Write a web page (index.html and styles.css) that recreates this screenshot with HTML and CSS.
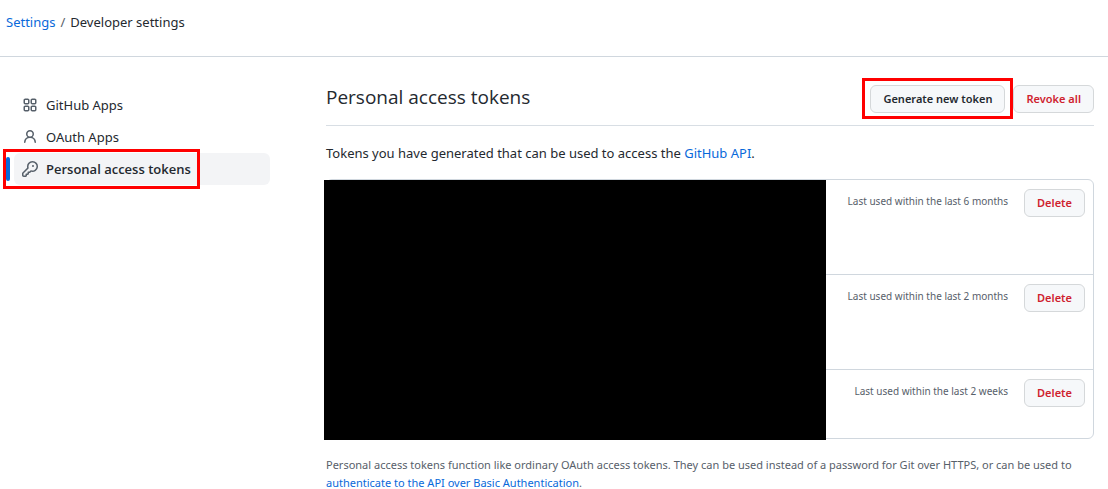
FILE: index.html
```html
<!DOCTYPE html>
<html lang="en">
<head>
    <meta charset="UTF-8">
    <meta name="viewport" content="width=device-width, initial-scale=1.0">
    <title>Personal access tokens</title>
    <link rel="stylesheet" href="styles.css">
</head>
<body>

    <header class="page-header">
        <nav class="breadcrumb" aria-label="Breadcrumb">
            <a href="#">Settings</a>
            <span class="separator">/</span>
            <span>Developer settings</span>
        </nav>
    </header>

    <div class="layout">
        <nav class="sidebar" aria-label="Developer settings">
            <a class="nav-item" href="#">
                <svg width="16" height="16" viewBox="0 0 16 16"><path fill-rule="evenodd" d="M1.5 3.25c0-.966.784-1.75 1.75-1.75h2.5c.966 0 1.75.784 1.75 1.75v2.5A1.75 1.75 0 015.75 7.5h-2.5A1.75 1.75 0 011.5 5.75v-2.5zM3.25 3a.25.25 0 00-.25.25v2.5c0 .138.112.25.25.25h2.5A.25.25 0 006 5.75v-2.5A.25.25 0 005.75 3h-2.5zM1.5 10.25c0-.966.784-1.75 1.75-1.75h2.5c.966 0 1.75.784 1.75 1.75v2.5a1.75 1.75 0 01-1.75 1.75h-2.5a1.75 1.75 0 01-1.75-1.75v-2.5zM3.25 10a.25.25 0 00-.25.25v2.5c0 .138.112.25.25.25h2.5a.25.25 0 00.25-.25v-2.5a.25.25 0 00-.25-.25h-2.5zM8.5 3.25c0-.966.784-1.75 1.75-1.75h2.5c.966 0 1.75.784 1.75 1.75v2.5a1.75 1.75 0 01-1.75 1.75h-2.5A1.75 1.75 0 018.5 5.75v-2.5zM10.25 3a.25.25 0 00-.25.25v2.5c0 .138.112.25.25.25h2.5a.25.25 0 00.25-.25v-2.5a.25.25 0 00-.25-.25h-2.5zM8.5 10.25c0-.966.784-1.75 1.75-1.75h2.5c.966 0 1.75.784 1.75 1.75v2.5a1.75 1.75 0 01-1.75 1.75h-2.5a1.75 1.75 0 01-1.75-1.75v-2.5zM10.25 10a.25.25 0 00-.25.25v2.5c0 .138.112.25.25.25h2.5a.25.25 0 00.25-.25v-2.5a.25.25 0 00-.25-.25h-2.5z"/></svg>
                <span>GitHub Apps</span>
            </a>
            <a class="nav-item" href="#">
                <svg width="16" height="16" viewBox="0 0 16 16"><path fill-rule="evenodd" d="M10.5 5a2.5 2.5 0 11-5 0 2.5 2.5 0 015 0zm.061 3.073a4 4 0 10-5.123 0 6.004 6.004 0 00-3.431 5.142.75.75 0 001.498.07 4.5 4.5 0 018.99 0 .75.75 0 101.498-.07 6.005 6.005 0 00-3.432-5.142z"/></svg>
                <span>OAuth Apps</span>
            </a>
            <a class="nav-item active" href="#" aria-current="page">
                <svg width="16" height="16" viewBox="0 0 16 16"><path fill-rule="evenodd" d="M6.5 5.5a4 4 0 112.731 3.795.75.75 0 00-.768.18L7.44 10.5H6.25a.75.75 0 00-.75.75v1.19l-.06.06H4.25a.75.75 0 00-.75.75v1.19l-.06.06H1.75a.25.25 0 01-.25-.25v-1.69l5.024-5.023a.75.75 0 00.181-.768A3.995 3.995 0 016.5 5.5zm4-5.5a5.5 5.5 0 00-5.348 6.788L.22 11.72a.75.75 0 00-.22.53v2C0 15.216.784 16 1.75 16h2a.75.75 0 00.53-.22l.5-.5a.75.75 0 00.22-.53V14h.75a.75.75 0 00.53-.22l.5-.5a.75.75 0 00.22-.53V12h.75a.75.75 0 00.53-.22l.932-.932A5.5 5.5 0 1010.5 0zm.5 6a1 1 0 100-2 1 1 0 000 2z"/></svg>
                <span>Personal access tokens</span>
            </a>
        </nav>

        <main class="content">
            <div class="subhead">
                <h1>Personal access tokens</h1>
                <div class="subhead-actions">
                    <div class="highlight">
                        <button class="btn" type="button">Generate new token</button>
                    </div>
                    <button class="btn btn-danger" type="button">Revoke all</button>
                </div>
            </div>

            <p class="intro">Tokens you have generated that can be used to access the <a href="#">GitHub API</a>.</p>

            <div class="token-list">
                <div class="token-row">
                    <span class="last-used">Last used within the last 6 months</span>
                    <button class="btn btn-danger" type="button">Delete</button>
                </div>
                <div class="token-row">
                    <span class="last-used">Last used within the last 2 months</span>
                    <button class="btn btn-danger" type="button">Delete</button>
                </div>
                <div class="token-row">
                    <span class="last-used">Last used within the last 2 weeks</span>
                    <button class="btn btn-danger" type="button">Delete</button>
                </div>
                <div class="redacted"></div>
            </div>

            <p class="note">Personal access tokens function like ordinary OAuth access tokens. They can be used instead of a password for Git over HTTPS, or can be used to <a href="#">authenticate to the API over Basic Authentication</a>.</p>
        </main>
    </div>

</body>
</html>
```
FILE: styles.css
```css
*,
*::before,
*::after {
    margin: 0;
    padding: 0;
    box-sizing: border-box;
}

body {
    background: #fff;
    color: #24292f;
    font-family: "Segoe UI", "Noto Sans", sans-serif;
    font-size: 13px;
    line-height: 20px;
}

a {
    color: #0969da;
    text-decoration: none;
}

.page-header {
    padding: 12px 6px 24px;
    border-bottom: 1px solid #d0d7de;
}

.breadcrumb {
    display: flex;
    gap: 5px;
}

.separator {
    color: #57606a;
}

.layout {
    display: flex;
    gap: 56px;
    padding: 28px 14px 0 6px;
}

/* sidebar */
.sidebar {
    flex: 0 0 264px;
    padding-top: 4px;
}

.nav-item {
    display: flex;
    align-items: center;
    gap: 8px;
    height: 32px;
    margin-left: 8px;
    padding: 0 8px;
    border-radius: 6px;
    color: #24292f;
}

.nav-item svg {
    fill: #57606a;
}

.nav-item.active {
    position: relative;
    background: #f3f4f6;
    font-family: "Segoe UI", "Open Sans", sans-serif;
    font-weight: 600;
}

.nav-item.active::before {
    content: "";
    position: absolute;
    top: 4px;
    bottom: 4px;
    left: -8px;
    width: 4px;
    border-radius: 6px;
    background: #0969da;
}

.nav-item.active::after {
    content: "";
    position: absolute;
    top: -4px;
    bottom: -4px;
    left: -11px;
    width: 197px;
    border: 3px solid #f00;
}

/* content */
.content {
    flex: 1;
    min-width: 0;
}

.subhead {
    display: flex;
    align-items: flex-start;
    justify-content: space-between;
    padding-bottom: 12px;
    border-bottom: 1px solid #d8dee4;
}

.subhead h1 {
    font-family: "Segoe UI", "Open Sans", sans-serif;
    font-size: 19px;
    font-weight: 400;
    line-height: 24px;
}

.subhead-actions {
    display: flex;
    gap: 8px;
}

.highlight {
    position: relative;
}

.highlight::after {
    content: "";
    position: absolute;
    inset: -7px -8px -6px;
    border: 3px solid #f00;
    pointer-events: none;
}

.btn {
    height: 28px;
    padding: 0 12px;
    border: 1px solid #d5d8da;
    border-radius: 6px;
    background: #f6f8fa;
    color: #24292f;
    font-family: "Segoe UI", "Noto Sans", sans-serif;
    font-size: 11px;
    font-weight: 600;
    line-height: 20px;
    white-space: nowrap;
    cursor: pointer;
}

.btn-danger {
    color: #cf222e;
}

.intro {
    margin: 17px 0 16px;
}

.token-list {
    position: relative;
    border: 1px solid #d0d7de;
    border-radius: 6px;
}

.token-row {
    display: flex;
    align-items: flex-start;
    justify-content: flex-end;
    gap: 16px;
    min-height: 95px;
    padding: 9px 8px;
    border-bottom: 1px solid #d0d7de;
}

.token-row:nth-child(3) {
    min-height: 68px;
    border-bottom: 0;
}

.last-used {
    color: #57606a;
    font-size: 10px;
    line-height: 24px;
}

.redacted {
    position: absolute;
    top: 0;
    bottom: -2px;
    left: -3px;
    width: 502px;
    background: #000;
}

.note {
    margin-top: 17px;
    color: #57606a;
    font-size: 11px;
    line-height: 18px;
}
```
